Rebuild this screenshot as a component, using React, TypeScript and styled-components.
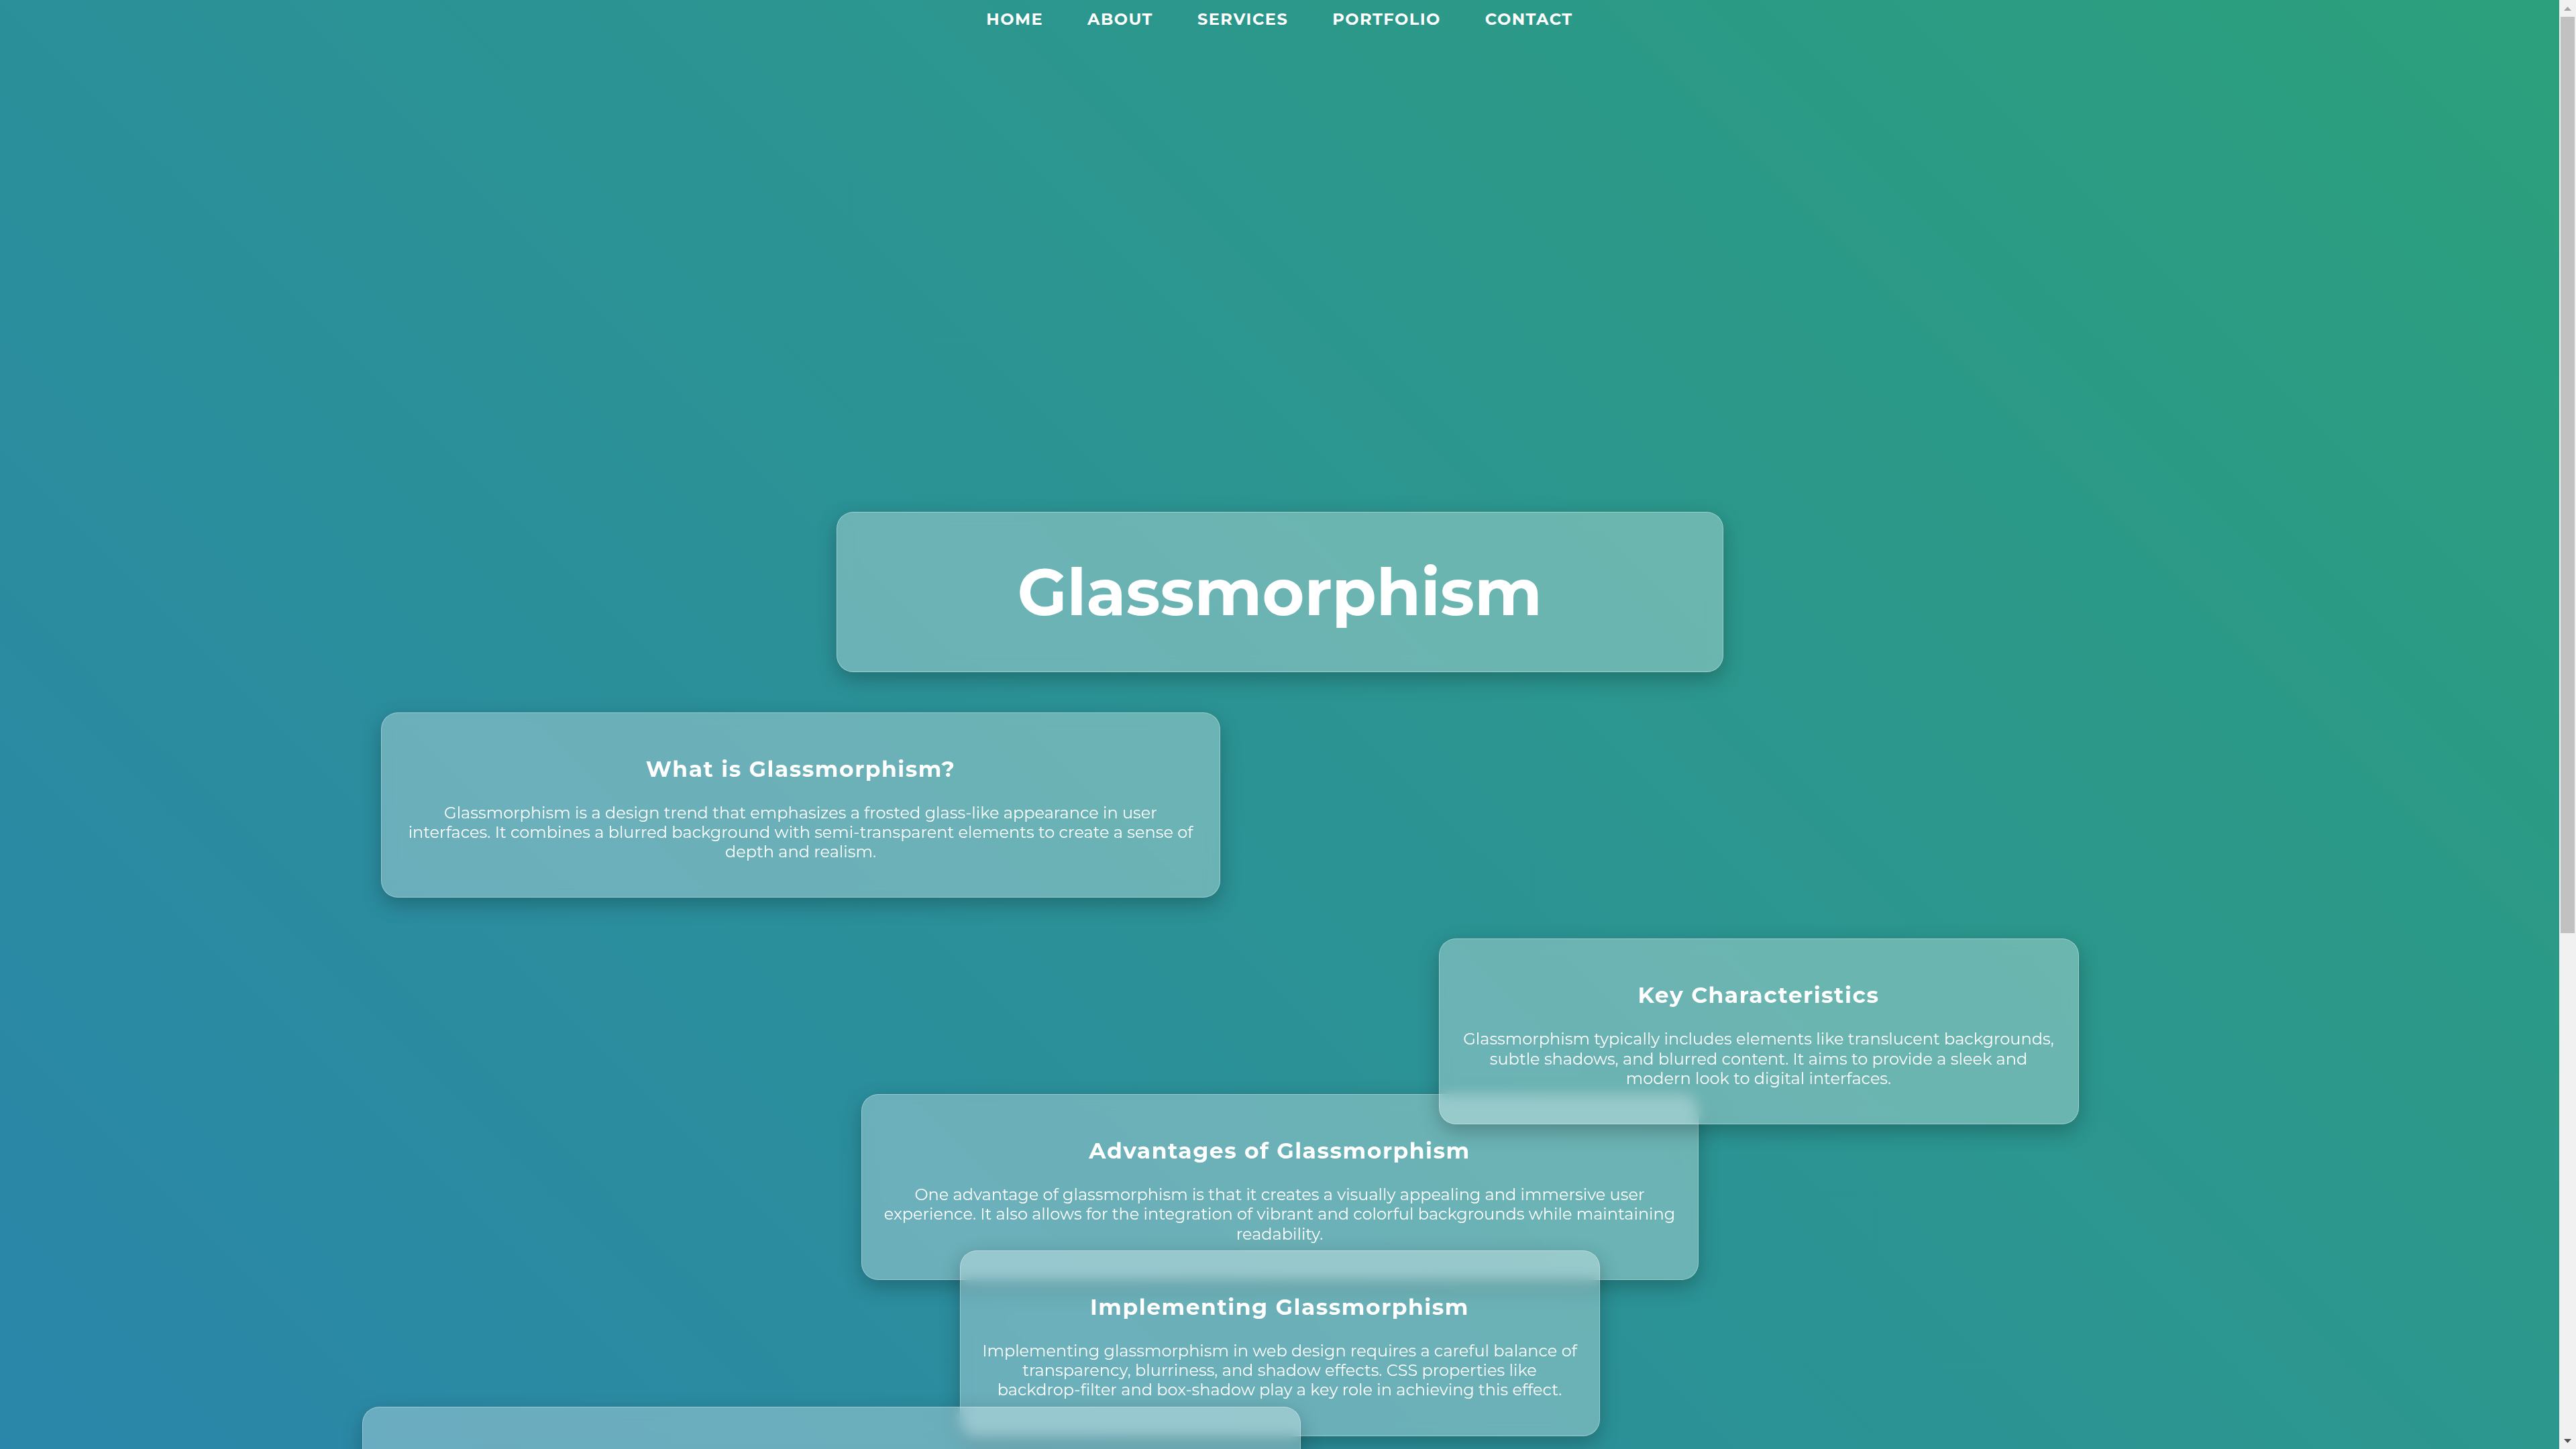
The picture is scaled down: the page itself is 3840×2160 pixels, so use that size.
import styled, { createGlobalStyle } from "styled-components";

type Topic = {
  title: string;
  text: string;
  width: number;
  shift: number;
  gap: number;
  layer: number;
};

const links = ["Home", "About", "Services", "Portfolio", "Contact"];

const topics: Topic[] = [
  {
    title: "What is Glassmorphism?",
    text: "Glassmorphism is a design trend that emphasizes a frosted glass-like appearance in user interfaces. It combines a blurred background with semi-transparent elements to create a sense of depth and realism.",
    width: 1251,
    shift: -714,
    gap: 60,
    layer: 1,
  },
  {
    title: "Key Characteristics",
    text: "Glassmorphism typically includes elements like translucent backgrounds, subtle shadows, and blurred content. It aims to provide a sleek and modern look to digital interfaces.",
    width: 954,
    shift: 714,
    gap: 61,
    layer: 3,
  },
  {
    title: "Advantages of Glassmorphism",
    text: "One advantage of glassmorphism is that it creates a visually appealing and immersive user experience. It also allows for the integration of vibrant and colorful backgrounds while maintaining readability.",
    width: 1248,
    shift: 0,
    gap: -45,
    layer: 2,
  },
  {
    title: "Implementing Glassmorphism",
    text: "Implementing glassmorphism in web design requires a careful balance of transparency, blurriness, and shadow effects. CSS properties like backdrop-filter and box-shadow play a key role in achieving this effect.",
    width: 954,
    shift: 0,
    gap: -44,
    layer: 4,
  },
  {
    title: "Examples of Glassmorphism",
    text: "Glassmorphism can be found in operating systems, dashboards and landing pages, where frosted panels float above colorful gradients and photos.",
    width: 1399,
    shift: -668,
    gap: -44,
    layer: 5,
  },
  {
    title: "Conclusion",
    text: "Used with care, glassmorphism adds depth and elegance to an interface without sacrificing clarity and usability.",
    width: 1100,
    shift: 500,
    gap: -44,
    layer: 6,
  },
];

const GlobalStyle = createGlobalStyle`
  html {
    scrollbar-width: none;
  }
  html, body {
    margin: 0;
    padding: 0;
  }
  body {
    font-family: Montserrat, "DejaVu Sans", "Liberation Sans", sans-serif;
  }
`;

const Page = styled.div`
  min-height: 3337px;
  margin-right: 25px;
  box-sizing: border-box;
  display: flex;
  flex-direction: column;
  align-items: center;
  background: linear-gradient(45deg, #2a81b3, #2ca07c);
  color: #fff;
`;

const Nav = styled.nav`
  display: flex;
  justify-content: center;
  gap: 66px;
  padding: 15px 0;
`;

const NavLink = styled.a`
  color: #fff;
  text-decoration: none;
  text-transform: uppercase;
  font-size: 24px;
  font-weight: 700;
  line-height: 1.2;
  letter-spacing: 1.5px;
`;

const Main = styled.main`
  width: 100%;
  display: flex;
  flex-direction: column;
  align-items: center;
  padding: 704px 0 200px;
`;

const Glass = styled.div`
  box-sizing: border-box;
  background: rgba(255, 255, 255, 0.3);
  border: 1px solid rgba(255, 255, 255, 0.35);
  border-radius: 25px;
  box-shadow: 0 10px 30px rgba(0, 0, 0, 0.25);
  backdrop-filter: blur(10px);
  -webkit-backdrop-filter: blur(10px);
  text-align: center;
`;

const Hero = styled(Glass)`
  width: 1322px;
  padding: 64px 0;
`;

const HeroTitle = styled.h1`
  margin: 0;
  font-size: 96px;
  font-weight: 700;
  line-height: 109px;
`;

const Card = styled(Glass)<{ $width: number; $shift: number; $gap: number; $layer: number }>`
  position: relative;
  z-index: ${({ $layer }) => $layer};
  width: ${({ $width }) => $width}px;
  margin-top: ${({ $gap }) => $gap}px;
  margin-left: ${({ $shift }) => ($shift > 0 ? $shift * 2 : 0)}px;
  margin-right: ${({ $shift }) => ($shift < 0 ? -$shift * 2 : 0)}px;
  padding: 63px 30px 53px;
`;

const CardTitle = styled.h2`
  margin: 0 0 30px;
  font-size: 33px;
  font-weight: 700;
  line-height: 40.8px;
  letter-spacing: 1.5px;
`;

const CardText = styled.p`
  margin: 0;
  font-size: 24px;
  font-weight: 400;
  line-height: 29.3px;
`;

const ScrollTrack = styled.div`
  position: fixed;
  top: 0;
  right: 0;
  bottom: 0;
  width: 25px;
  display: flex;
  flex-direction: column;
  background: #f1f1f1;
`;

const ScrollButton = styled.div`
  height: 25px;
  flex: none;
  display: flex;
  align-items: center;
  justify-content: center;
`;

const ScrollThumb = styled.div`
  height: 1366px;
  margin: 0 2px;
  background: #c1c1c1;
`;

const ScrollRest = styled.div`
  flex: 1;
`;

export default function App() {
  return (
    <>
      <GlobalStyle />
      <Page>
        <Nav>
          {links.map((link) => (
            <NavLink key={link} href="#">
              {link}
            </NavLink>
          ))}
        </Nav>
        <Main>
          <Hero>
            <HeroTitle>Glassmorphism</HeroTitle>
          </Hero>
          {topics.map((topic) => (
            <Card
              key={topic.title}
              $width={topic.width}
              $shift={topic.shift}
              $gap={topic.gap}
              $layer={topic.layer}
            >
              <CardTitle>{topic.title}</CardTitle>
              <CardText>{topic.text}</CardText>
            </Card>
          ))}
        </Main>
      </Page>
      <ScrollTrack>
        <ScrollButton>
          <svg width="11" height="6" viewBox="0 0 11 6">
            <polygon points="0,6 5.5,0 11,6" fill="#a3a3a3" />
          </svg>
        </ScrollButton>
        <ScrollThumb />
        <ScrollRest />
        <ScrollButton>
          <svg width="11" height="6" viewBox="0 0 11 6">
            <polygon points="0,0 11,0 5.5,6" fill="#505050" />
          </svg>
        </ScrollButton>
      </ScrollTrack>
    </>
  );
}
